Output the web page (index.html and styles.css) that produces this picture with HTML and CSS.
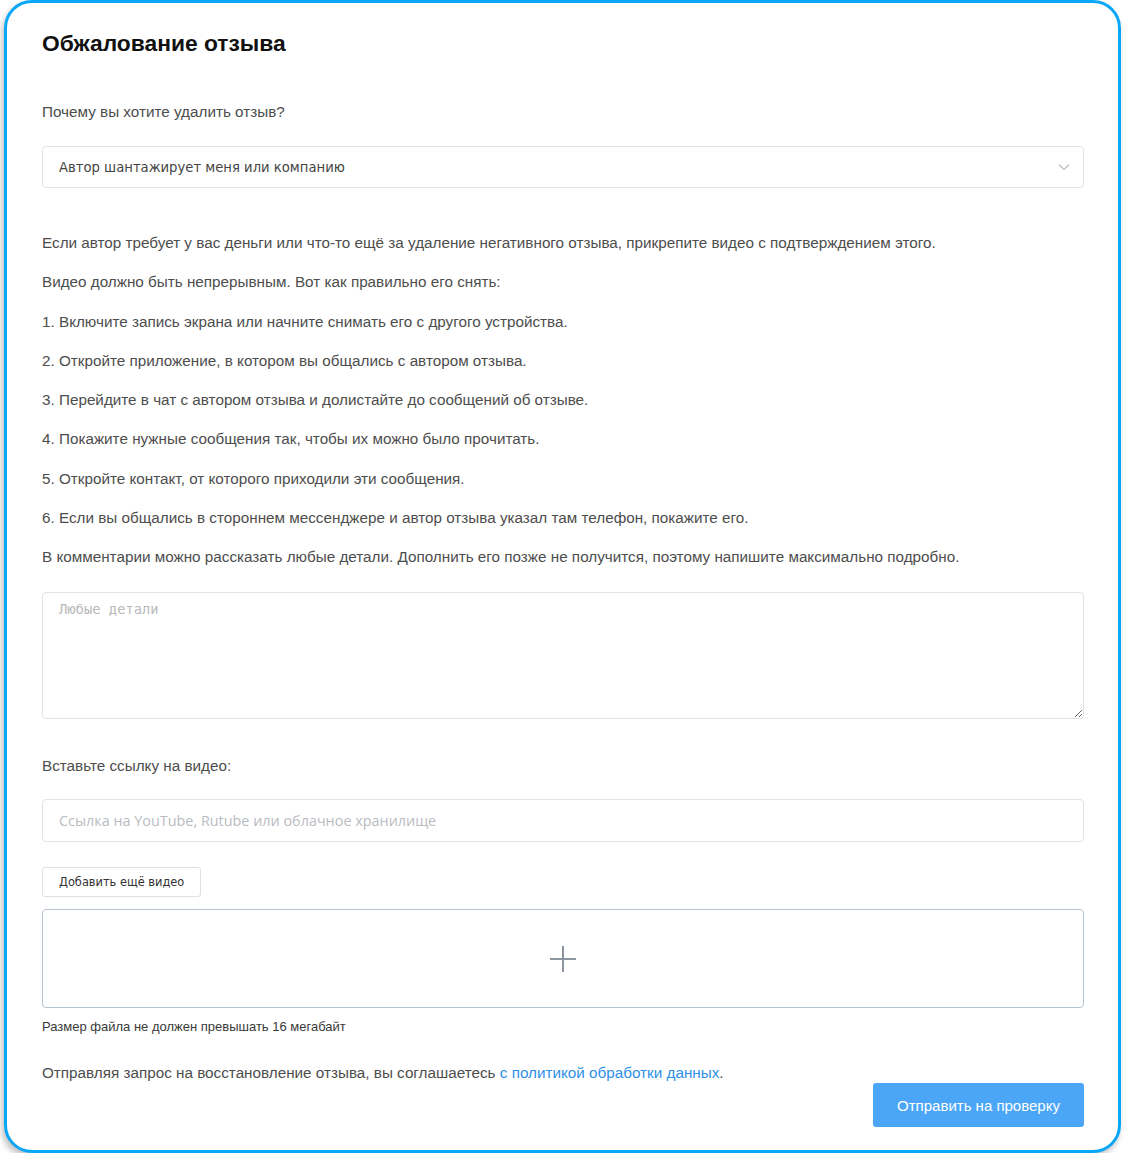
FILE: index.html
```html
<!DOCTYPE html>
<html>
	<head>
		<meta charset="UTF-8">
		<title>Обжалование отзыва</title>
		<link rel="stylesheet" href="styles.css">
	</head>
	<body>
		<div class="card">
			<h1 class="title">Обжалование отзыва</h1>
			<p class="label">Почему вы хотите удалить отзыв?</p>
			<div class="select">
				<span>Автор шантажирует меня или компанию</span>
				<svg class="chev" width="12" height="8" viewBox="0 0 12 8"><path d="M1 1.5 L6 6.5 L11 1.5" fill="none" stroke="#b9bec6" stroke-width="1.2"/></svg>
			</div>
			<div class="info">
				<p>Если автор требует у вас деньги или что-то ещё за удаление негативного отзыва, прикрепите видео с подтверждением этого.</p>
				<p>Видео должно быть непрерывным. Вот как правильно его снять:</p>
				<p>1. Включите запись экрана или начните снимать его с другого устройства.</p>
				<p>2. Откройте приложение, в котором вы общались с автором отзыва.</p>
				<p>3. Перейдите в чат с автором отзыва и долистайте до сообщений об отзыве.</p>
				<p>4. Покажите нужные сообщения так, чтобы их можно было прочитать.</p>
				<p>5. Откройте контакт, от которого приходили эти сообщения.</p>
				<p>6. Если вы общались в стороннем мессенджере и автор отзыва указал там телефон, покажите его.</p>
				<p>В комментарии можно рассказать любые детали. Дополнить его позже не получится, поэтому напишите максимально подробно.</p>
			</div>
			<textarea class="details" placeholder="Любые детали"></textarea>
			<p class="label label-video">Вставьте ссылку на видео:</p>
			<input class="link" type="text" placeholder="Ссылка на YouTube, Rutube или облачное хранилище">
			<button class="add">Добавить ещё видео</button>
			<div class="drop">
				<svg width="28" height="28" viewBox="0 0 28 28"><path d="M14 1 V27 M1 14 H27" stroke="#8c96a3" stroke-width="2"/></svg>
			</div>
			<p class="hint">Размер файла не должен превышать 16 мегабайт</p>
			<p class="agree">Отправляя запрос на восстановление отзыва, вы соглашаетесь <a href="#">с политикой обработки данных</a>.</p>
			<div class="actions"><button class="submit">Отправить на проверку</button></div>
		</div>
	</body>
</html>
```
FILE: styles.css
```css
*{margin: 0;padding: 0;box-sizing: border-box;}
body{background: #fff;font-family: "Liberation Sans", Arial, sans-serif;color: #4a4a4a;}
.card{margin: 0 5px 0 4px;border: 3px solid #0aa7f6;border-radius: 28px;padding: 27px 34px 23px 35px;box-shadow: -2px 4px 6px rgba(0,0,0,0.25);background: #fff;}
.title{font-size: 22.8px;line-height: 26px;font-weight: bold;color: #111;}
.label{font-size: 15.25px;line-height: 20px;margin-top: 46px;color: #4d4d4d;}
.select{margin-top: 24px;height: 42px;border: 1px solid #e2e3e6;border-radius: 4px;display: flex;align-items: center;justify-content: space-between;padding: 0 13px 0 16px;}
.select span{font-family: "DejaVu Sans", Tahoma, sans-serif;font-size: 13.2px;color: #444;}
.info{margin-top: 45px;display: flex;flex-direction: column;gap: 19.25px;}
.info p{font-size: 15.25px;line-height: 20px;color: #4d4d4d;}
.details{display: block;width: 100%;height: 127px;margin-top: 25px;border: 1px solid #e2e3e6;border-radius: 4px;padding: 8px 16px;font-family: "DejaVu Sans Mono", "Liberation Mono", monospace;font-size: 13.8px;resize: vertical;outline: none;}
.details::placeholder{color: #b9b9b9;}
.label-video{margin-top: 37px;}
.link{display: block;width: 100%;height: 43px;margin-top: 23px;border: 1px solid #e2e3e6;border-radius: 4px;padding: 0 16px;font-family: "Open Sans", sans-serif;font-size: 14.4px;outline: none;}
.link::placeholder{color: #b9bcc2;}
.add{display: block;margin-top: 25px;height: 30px;padding: 0 16px;background: #fff;border: 1px solid #dfe1e5;border-radius: 3px;font-family: "DejaVu Sans", Tahoma, sans-serif;font-size: 11.4px;color: #333;}
.drop{margin-top: 12px;height: 99px;border: 1px solid #b8c3d1;border-radius: 4px;display: flex;align-items: center;justify-content: center;}
.hint{margin-top: 11px;font-size: 13px;line-height: 16px;color: #3a3a3a;}
.agree{margin-top: 28px;font-size: 15.25px;line-height: 20px;color: #4d4d4d;}
.agree a{color: #2f8fe6;text-decoration: none;}
.actions{display: flex;justify-content: flex-end;}
.submit{width: 211px;height: 44px;background: #4ba6f7;border: 0;border-radius: 3px;color: #fff;font-family: "Liberation Sans", Arial, sans-serif;font-size: 15px;}
```
